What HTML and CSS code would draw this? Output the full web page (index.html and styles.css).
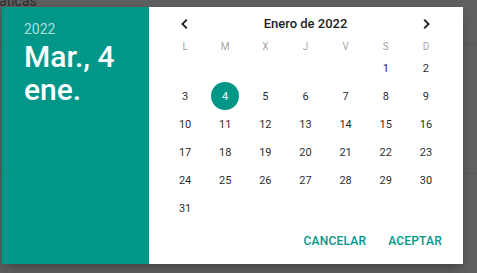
FILE: index.html
```html
<!DOCTYPE html>
<html lang="es">
<head>
<meta charset="utf-8">
<title>Selector de fecha</title>
<link rel="stylesheet" href="styles.css">
</head>
<body>
<div class="page-behind">
  <span class="behind-text">áticas</span>
  <div class="behind-line l1"></div>
  <div class="behind-line l2"></div>
</div>
<div class="stage">
  <div class="dialog">
    <div class="toolbar">
      <div class="year">2022</div>
      <div class="date">Mar., 4<br>ene.</div>
    </div>
    <div class="calendar">
      <div class="cal-header">
        <button class="nav prev" aria-label="Mes anterior">
          <svg width="12" height="12" viewBox="0 0 12 12"><path d="M7.8 1.6 3.4 6l4.4 4.4" fill="none" stroke="#222" stroke-width="1.9"/></svg>
        </button>
        <div class="title">Enero de 2022</div>
        <button class="nav next" aria-label="Mes siguiente">
          <svg width="12" height="12" viewBox="0 0 12 12"><path d="M4.2 1.6 8.6 6l-4.4 4.4" fill="none" stroke="#222" stroke-width="1.9"/></svg>
        </button>
      </div>
      <div class="weekdays">
        <span>L</span><span>M</span><span>X</span><span>J</span><span>V</span><span>S</span><span>D</span>
      </div>
      <div class="days">
        <span></span><span></span><span></span><span></span><span></span><span class="day">1</span><span class="day">2</span>
        <span class="day">3</span><span class="day selected"><b>4</b></span><span class="day">5</span><span class="day">6</span><span class="day">7</span><span class="day">8</span><span class="day">9</span>
        <span class="day">10</span><span class="day">11</span><span class="day">12</span><span class="day">13</span><span class="day">14</span><span class="day">15</span><span class="day">16</span>
        <span class="day">17</span><span class="day">18</span><span class="day">19</span><span class="day">20</span><span class="day">21</span><span class="day">22</span><span class="day">23</span>
        <span class="day">24</span><span class="day">25</span><span class="day">26</span><span class="day">27</span><span class="day">28</span><span class="day">29</span><span class="day">30</span>
        <span class="day">31</span><span></span><span></span><span></span><span></span><span></span><span></span>
      </div>
      <div class="actions">
        <button class="btn">Cancelar</button>
        <button class="btn">Aceptar</button>
      </div>
    </div>
  </div>
</div>
</body>
</html>
```
FILE: styles.css
```css
* { box-sizing: border-box; }
html, body {
  margin: 0;
  padding: 0;
  width: 477px;
  height: 273px;
  overflow: hidden;
}
body {
  background: #616161;
  font-family: Roboto, "Liberation Sans", Arial, sans-serif;
  position: relative;
}
.page-behind {
  position: absolute;
  inset: 0;
}
.behind-text {
  position: absolute;
  left: -1px;
  top: -7px;
  font-size: 14px;
  color: #2b2b2b;
}
.behind-line {
  position: absolute;
  left: 0;
  right: 0;
  height: 1px;
  background: #595959;
}
.behind-line.l1 { top: 43px; }
.behind-line.l2 { top: 173px; }
.stage {
  position: relative;
  padding: 7px 0 0 2px;
  display: flex;
}
.dialog {
  width: 461px;
  height: 257px;
  display: flex;
  background: #fff;
  box-shadow: 0 6px 10px -4px rgba(0,0,0,0.25), 0 4px 14px 2px rgba(0,0,0,0.12);
}
.toolbar {
  width: 147px;
  background: #009688;
  padding: 14px 0 0 22px;
  display: flex;
  flex-direction: column;
  gap: 3px;
}
.year {
  font-size: 14px;
  line-height: 16px;
  color: rgba(255,255,255,0.7);
}
.date {
  font-size: 30px;
  line-height: 33px;
  font-weight: 500;
  color: #fff;
}
.calendar {
  width: 314px;
  display: flex;
  flex-direction: column;
  padding: 0 17px 0 16px;
}
.cal-header {
  height: 33px;
  display: grid;
  grid-template-columns: 40px 1fr 40px;
  align-items: center;
}
.nav {
  border: 0;
  background: none;
  padding: 0;
  display: flex;
  justify-content: center;
  align-items: center;
  height: 20px;
}
.nav svg { display: block; }
.title {
  text-align: center;
  font-size: 13px;
  font-weight: 500;
  color: #222;
}
.weekdays, .days {
  display: grid;
  grid-template-columns: repeat(7, 1fr);
}
.weekdays {
  height: 14px;
  align-items: center;
}
.weekdays span {
  text-align: center;
  font-size: 10px;
  line-height: 14px;
  color: rgba(0,0,0,0.4);
}
.days span {
  height: 28px;
  display: flex;
  align-items: center;
  justify-content: center;
}
.day {
  font-size: 11px;
  color: rgba(0,0,0,0.87);
}
.day.selected b {
  width: 28px;
  height: 28px;
  border-radius: 50%;
  background: #009688;
  color: #fff;
  font-weight: 400;
  display: flex;
  align-items: center;
  justify-content: center;
}
.actions {
  height: 38px;
  display: flex;
  justify-content: flex-end;
  align-items: center;
  gap: 6px;
  margin-right: -4px;
}
.btn {
  border: 0;
  background: none;
  padding: 6px 8px;
  font-family: Roboto, "Liberation Sans", Arial, sans-serif;
  font-size: 12px;
  font-weight: 500;
  letter-spacing: 0.2px;
  text-transform: uppercase;
  color: #009688;
}
```
